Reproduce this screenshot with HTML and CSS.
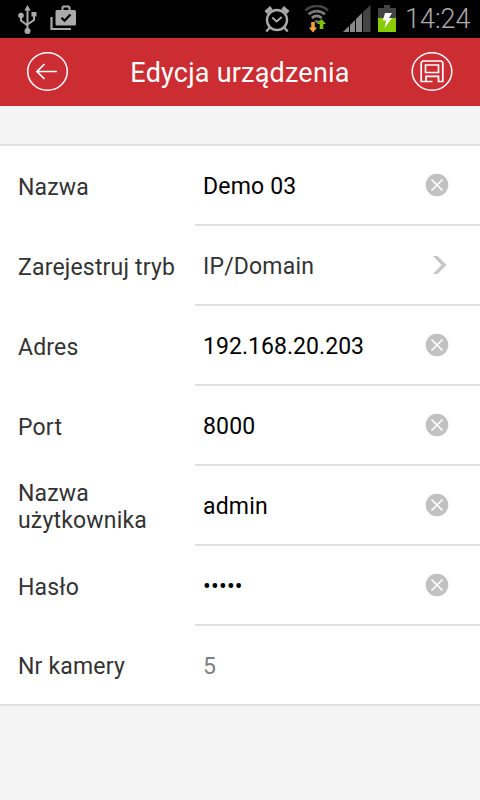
FILE: index.html
```html
<!DOCTYPE html>
<html lang="pl">
<head>
    <meta charset="UTF-8">
    <meta name="viewport" content="width=device-width, initial-scale=1.0">
    <title>Edycja urządzenia</title>
    <link rel="stylesheet" href="styles.css">
</head>
<body>

    <!-- Shared icons -->
    <svg class="sprite" width="0" height="0">
        <symbol id="clear" viewBox="0 0 24 24">
            <circle cx="12" cy="12" r="11.3" fill="#c1c1c1"/>
            <path d="M6.500 6.500l11 11M17.500 6.500l-11 11" stroke="#fff" stroke-width="1.700" fill="none"/>
        </symbol>
    </svg>

    <div class="status-bar">
        <div class="status-left">
            <svg width="20" height="30" viewBox="0 0 20 30" fill="#aaa">
                <path d="M10.500 3v24M4 11v4.500l6.500 5M17 9v6l-6.500 4.500" fill="none" stroke="#aaa" stroke-width="2"/>
                <path d="M10.500 0l3.200 5.500H7.300z"/>
                <circle cx="4" cy="10.500" r="2.800"/>
                <path d="M14.500 7h5v4.500h-5z"/>
                <circle cx="10.500" cy="26" r="3"/>
            </svg>
            <svg width="28" height="28" viewBox="0 0 28 28">
                <path d="M1.500 12v12h19.500" fill="none" stroke="#aaa" stroke-width="2.200"/>
                <path d="M12.500 6V2.500l1-1h5l1 1V6" fill="none" stroke="#aaa" stroke-width="2"/>
                <rect x="5.500" y="5" width="20.500" height="15.500" rx="1.500" fill="#aaa"/>
                <path d="M11.500 12.700l3 3 6-6.200" fill="none" stroke="#000" stroke-width="2.300"/>
            </svg>
        </div>
        <div class="status-right">
            <svg width="26" height="28" viewBox="0 0 26 28" fill="none" stroke="#aaa">
                <circle cx="13" cy="15" r="10" stroke-width="2.400"/>
                <path d="M1.800 7.500l5.500-5M24.200 7.500l-5.500-5" stroke-width="3.800"/>
                <path d="M8.300 12.500l4.300 4 5.200-4.500" stroke-width="1.900"/>
                <path d="M5.800 22.500l-3.500 4M20.200 22.500l3.500 4" stroke-width="2.400"/>
            </svg>
            <svg class="wifi" width="26" height="28" viewBox="0 0 26 28">
                <g fill="none" stroke-width="2.700">
                    <path d="M1.500 5.500C8-.5 17.500-.5 24 5.500" stroke="#444"/>
                    <path d="M4.500 9.300C9.500 5 16 5 21 9.300" stroke="#777"/>
                    <path d="M7.800 13C11 10.300 14.500 10.300 17.700 13" stroke="#888"/>
                </g>
                <path d="M10 15.500h6.200L13 18.500z" fill="#888"/>
                <path d="M7.200 17h3.600v5.500h2.400L9 27.500l-4.200-5h2.400z" fill="#f9a13a"/>
                <path d="M15.700 24v-5h-2.700l4.500-5 4.500 5h-2.700v5z" fill="#7fc400"/>
            </svg>
            <svg class="signal" width="28" height="28" viewBox="0 0 28 28">
                <path d="M0 27L6 21v6z" fill="#888"/>
                <path d="M7 27v-7l5-5v12z" fill="#888"/>
                <path d="M13 27V14l6-6v19z" fill="#888"/>
                <path d="M20 27V7l7.500-7v27z" fill="#444"/>
            </svg>
            <svg class="battery" width="18" height="28" viewBox="0 0 18 28">
                <path d="M6 0h6v3h6v10H0V3h6z" fill="#444"/>
                <path d="M0 13h18v14H0z" fill="#8c0"/>
                <path d="M7 8h7l-3 5h3L6.500 23l1.800-7.500H4.800z" fill="#fff"/>
            </svg>
            <span class="clock">14:24</span>
        </div>
    </div>

    <div class="header">
        <svg width="42" height="42" viewBox="0 0 42 42" fill="none" stroke="#fff">
            <ellipse cx="20.500" cy="20.500" rx="19.800" ry="18.700" stroke-width="1.500"/>
            <path d="M30 20.500H10M17.500 13L10 20.500l7.500 7.500" stroke-width="1.700"/>
        </svg>
        <h1>Edycja urządzenia</h1>
        <svg width="42" height="42" viewBox="0 0 42 42" fill="none" stroke="#fff">
            <ellipse cx="21" cy="20.500" rx="19.800" ry="18.700" stroke-width="1.500"/>
            <path d="M21.500 30.500H10.200V11.500l1.500-1.500h18.600l1.500 1.500v19h-4.300v-5.200H15v5.200" stroke-width="1.700"/>
            <path d="M14.500 14h13v7.500h-13z" stroke-width="1.700"/>
        </svg>
    </div>

    <div class="form">
        <div class="row">
            <div class="label">Nazwa</div>
            <div class="field">
                <span>Demo 03</span>
                <svg class="clear" width="24" height="24"><use href="#clear"/></svg>
            </div>
        </div>
        <div class="row">
            <div class="label">Zarejestruj tryb</div>
            <div class="field select">
                <span>IP/Domain</span>
                <svg class="arrow" width="14" height="20" viewBox="0 0 14 20">
                    <path d="M0 1h4.500l9 9-9 9H0l8.500-9z" fill="#c6c6c6"/>
                </svg>
            </div>
        </div>
        <div class="row">
            <div class="label">Adres</div>
            <div class="field">
                <span class="address">192.168.20.203</span>
                <svg class="clear" width="24" height="24"><use href="#clear"/></svg>
            </div>
        </div>
        <div class="row">
            <div class="label">Port</div>
            <div class="field">
                <span>8000</span>
                <svg class="clear" width="24" height="24"><use href="#clear"/></svg>
            </div>
        </div>
        <div class="row">
            <div class="label multiline">Nazwa użytkownika</div>
            <div class="field">
                <span>admin</span>
                <svg class="clear" width="24" height="24"><use href="#clear"/></svg>
            </div>
        </div>
        <div class="row">
            <div class="label">Hasło</div>
            <div class="field">
                <span class="password">•••••</span>
                <svg class="clear" width="24" height="24"><use href="#clear"/></svg>
            </div>
        </div>
        <div class="row">
            <div class="label">Nr kamery</div>
            <div class="field readonly">
                <span>5</span>
            </div>
        </div>
    </div>

</body>
</html>
```

FILE: styles.css
```css
* {
    box-sizing: border-box;
}

body {
    font-family: Roboto, "Noto Sans", sans-serif;
    margin: 0;
    background-color: #f4f4f4;
    color: #333;
}

svg {
    display: block;
    flex: none;
}

.sprite {
    position: absolute;
}

/* Status bar */
.status-bar {
    display: flex;
    justify-content: space-between;
    height: 38px;
    padding: 5px 8px 0 17px;
    background-color: #000;
}

.status-left,
.status-right {
    display: flex;
}

.status-left {
    gap: 13px;
}

.wifi {
    margin-left: 14px;
}

.signal {
    margin-left: 13px;
}

.battery {
    margin-left: 7px;
}

.clock {
    width: 67px;
    margin-left: 9px;
    font-size: 27px;
    font-weight: 300;
    line-height: 28px;
    white-space: nowrap;
    color: #aaa;
}

/* Header */
.header {
    display: flex;
    justify-content: space-between;
    align-items: center;
    height: 68px;
    padding: 0 27px;
    background-color: #cb2d32;
}

.header h1 {
    margin: 0;
    padding-top: 1px;
    font-size: 27px;
    font-weight: 400;
    letter-spacing: 0.2px;
    color: #fff;
}

/* Form */
.form {
    margin-top: 38px;
    border-top: 2px solid #e0e0e0;
    border-bottom: 2px solid #e0e0e0;
    background-color: #fff;
}

.row {
    display: flex;
    height: 80px;
    font-size: 23px;
    letter-spacing: 0.18px;
}

.label {
    display: flex;
    align-items: center;
    width: 195px;
    padding: 3px 16px 0 18px;
    line-height: 27px;
}

.label.multiline {
    padding-top: 1px;
}

.field {
    display: flex;
    flex: 1;
    justify-content: space-between;
    align-items: center;
    padding: 0 31px 0 8px;
    border-bottom: 2px solid #e0e0e0;
    color: #000;
}

.field span {
    padding-top: 2px;
}

.field .address {
    letter-spacing: 0.05px;
}

.field .password {
    letter-spacing: 0.2px;
}

.field.select {
    padding-right: 33px;
    color: #333;
}

.field.readonly {
    color: #808080;
}

.row:last-child {
    height: 78px;
}

.row:last-child .field {
    border-bottom: none;
}
```
